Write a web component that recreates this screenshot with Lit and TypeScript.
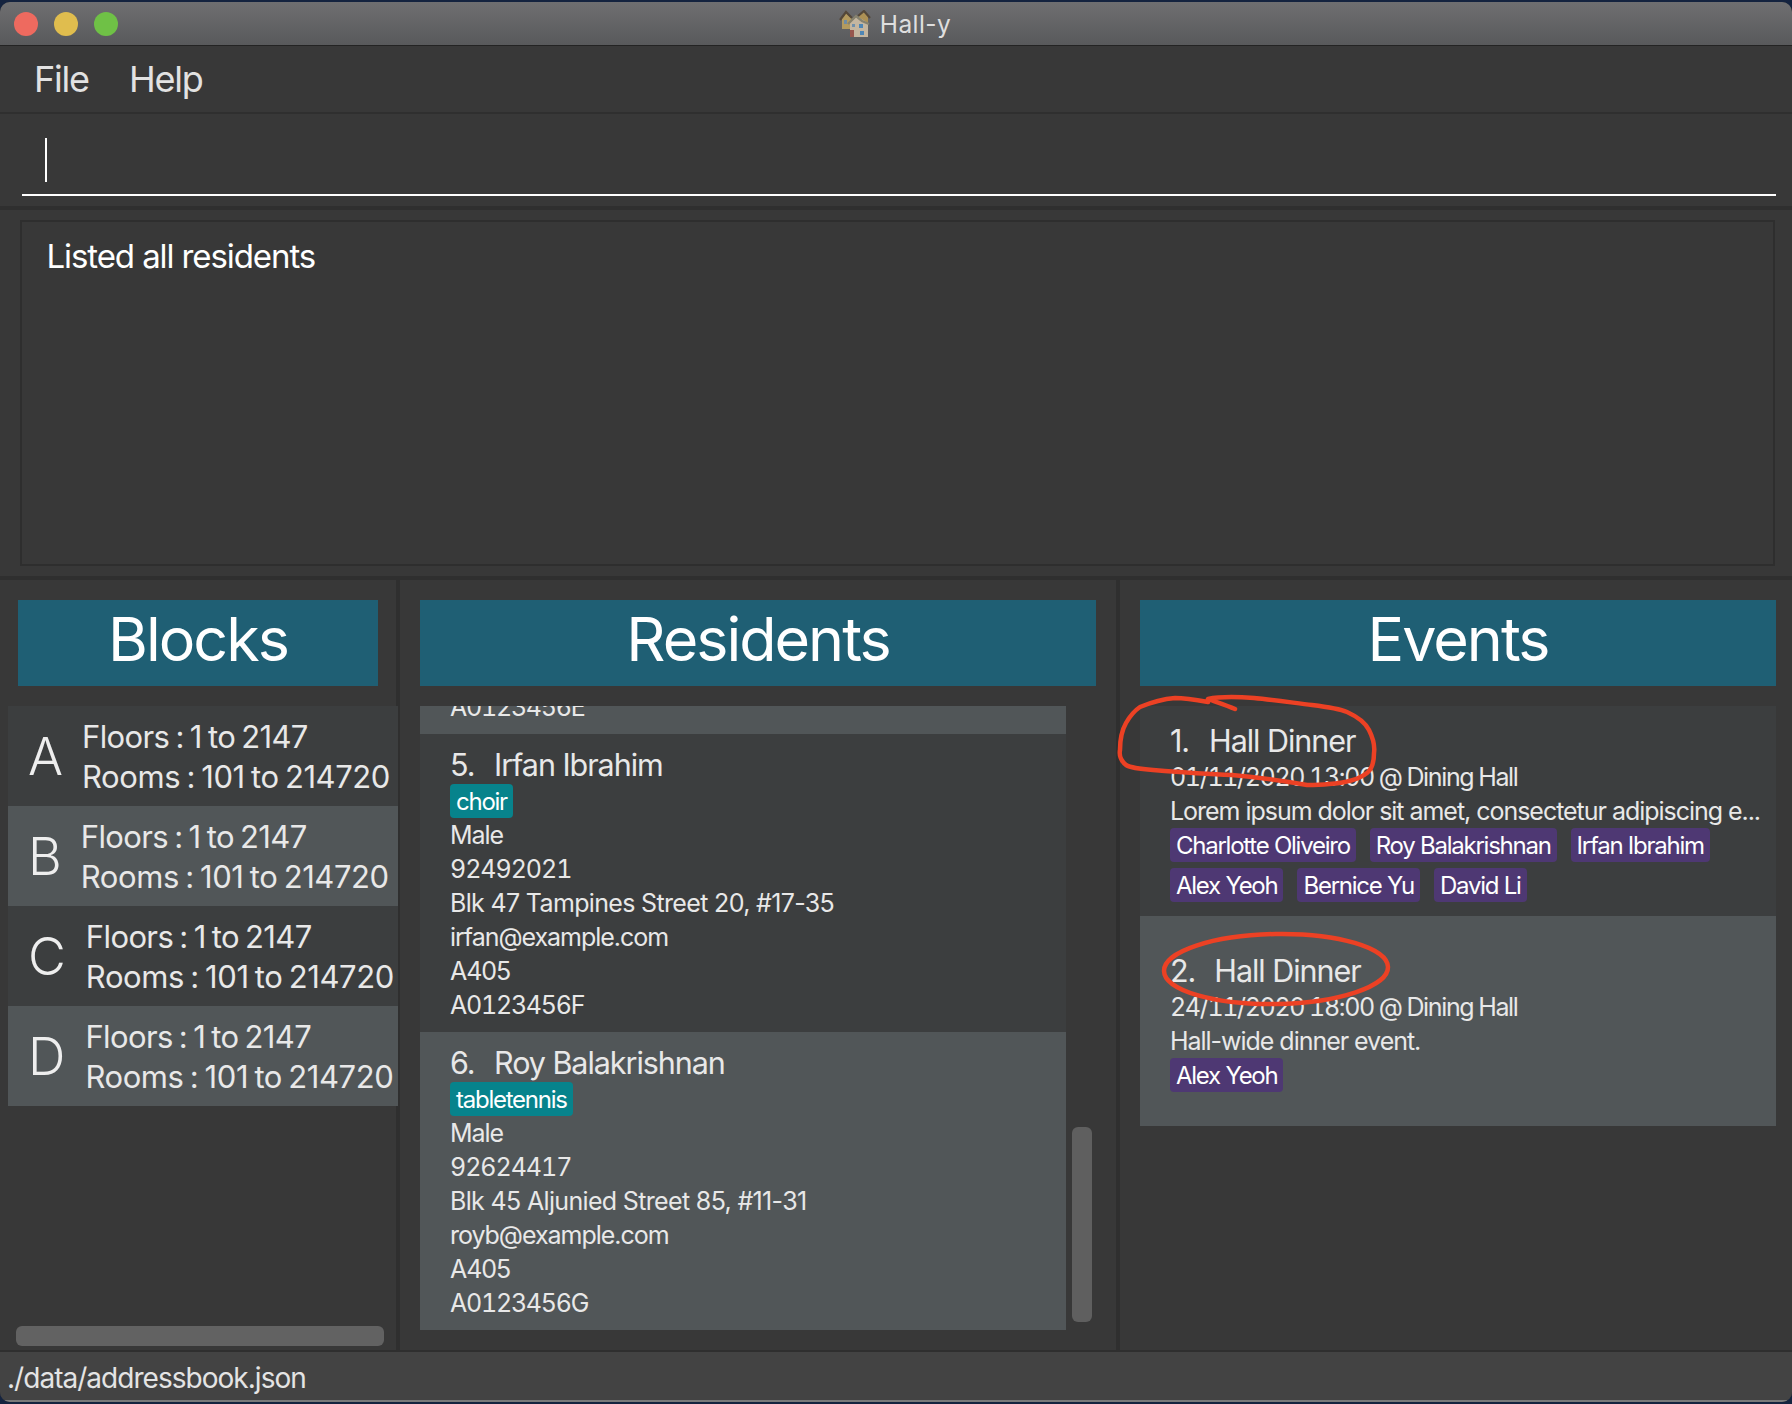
import { LitElement, html, css, svg } from "lit";
import { customElement } from "lit/decorators.js";

const blocks = [
  { l: "A", gap: 19 },
  { l: "B", gap: 19 },
  { l: "C", gap: 20 },
  { l: "D", gap: 20 },
];

const residents = [
  { n: "5.", name: "Irfan Ibrahim", tag: "choir", phone: "92492021", addr: "Blk 47 Tampines Street 20, #17-35", mail: "irfan@example.com", id: "A0123456F", alt: false },
  { n: "6.", name: "Roy Balakrishnan", tag: "tabletennis", phone: "92624417", addr: "Blk 45 Aljunied Street 85, #11-31", mail: "royb@example.com", id: "A0123456G", alt: true },
];

const events = [
  { n: "1.", date: "01/11/2020 13:00 @ Dining Hall", desc: "Lorem ipsum dolor sit amet, consectetur adipiscing e...", tags: ["Charlotte Oliveiro", "Roy Balakrishnan", "Irfan Ibrahim", "Alex Yeoh", "Bernice Yu", "David Li"], alt: false },
  { n: "2.", date: "24/11/2020 18:00 @ Dining Hall", desc: "Hall-wide dinner event.", tags: ["Alex Yeoh"], alt: true },
];

@customElement("app-root")
export class AppRoot extends LitElement {
  static styles = css`
    :host {
      display: block;
      position: relative;
      width: 1792px;
      height: 1404px;
      overflow: hidden;
      background: #14233f;
      font-family: Inter, "Liberation Sans", sans-serif;
      color: #e8e8e8;
    }
    .window {
      margin-top: 2px;
      height: 1400px;
      display: flex;
      flex-direction: column;
      background: #383838;
      border-radius: 10px 10px 10px 10px;
      overflow: hidden;
    }
    .title {
      flex: none;
      height: 43px;
      background: linear-gradient(#6f6f71, #58595b);
      border-bottom: 1px solid #232323;
      display: flex;
      align-items: center;
      justify-content: center;
      position: relative;
    }
    .lights {
      position: absolute;
      left: 14px;
      top: 10px;
      display: flex;
      gap: 16px;
    }
    .light { width: 24px; height: 24px; border-radius: 50%; }
    .red { background: #ee6a5f; }
    .yellow { background: #e0bd4e; }
    .green { background: #6fc146; }
    .app-title {
      display: flex;
      align-items: center;
      gap: 9px;
      margin-left: -2px;
      font-size: 24.5px;
      color: #dedede;
      letter-spacing: 0.4px;
    }
    .menu {
      flex: none;
      height: 66px;
      border-bottom: 2px solid #2f2f2f;
      display: flex;
      align-items: center;
      gap: 40px;
      padding-left: 34px;
      font-size: 36px;
      letter-spacing: -1.2px;
      color: #e2e2e2;
    }
    .command {
      flex: none;
      height: 92px;
      border-bottom: 4px solid #2f2f2f;
      box-sizing: content-box;
      padding: 0 16px 0 22px;
      display: flex;
      flex-direction: column;
    }
    .cmd-field {
      height: 82px;
      border-bottom: 2px solid #fff;
      padding: 24px 0 0 23px;
      box-sizing: border-box;
    }
    .caret { width: 2px; height: 44px; background: #fff; }
    .result-wrap {
      flex: none;
      height: 366px;
      box-sizing: content-box;
      border-bottom: 4px solid #2f2f2f;
      padding: 0 17px 0 20px;
      display: flex;
      align-items: center;
    }
    .result {
      flex: 1;
      height: 346px;
      box-sizing: border-box;
      border: 2px solid #2e2e2e;
      padding: 14px 0 0 24.5px;
      font-size: 33px;
      letter-spacing: -1.09px;
      color: #fff;
      line-height: 40px;
    }
    .panels {
      flex: none;
      height: 770px;
      border-bottom: 2px solid #2f2f2f;
      display: flex;
    }
    .panel {
      display: flex;
      flex-direction: column;
      padding-top: 20px;
      box-sizing: border-box;
      position: relative;
    }
    .p-blocks { width: 400px; border-right: 4px solid #2f2f2f; }
    .p-res { width: 720px; border-right: 4px solid #2f2f2f; }
    .p-events { width: 672px; }
    .head {
      height: 86px;
      flex: none;
      box-sizing: border-box;
      padding-bottom: 8px;
      background: #1f5f74;
      color: #fff;
      font-size: 61px;
      letter-spacing: -2px;
      display: flex;
      align-items: center;
      justify-content: center;
      margin-bottom: 20px;
    }
    .p-blocks .head { margin-left: 18px; margin-right: 18px; }
    .p-res .head { margin-left: 20px; margin-right: 20px; }
    .p-events .head { margin-left: 20px; margin-right: 16px; }
    .b-list { margin-left: 8px; margin-right: -2px; }
    .b-row {
      height: 100px;
      display: flex;
      align-items: center;
      background: #3c3e3f;
      padding-left: 20px;
      white-space: nowrap;
    }
    .b-row.alt { background: #515658; }
    .b-letter { font-size: 52px; line-height: 1; font-weight: 300; color: #eee; padding-top: 2px; }
    .b-text { font-size: 31px; line-height: 40px; padding-top: 2px; }
    .floors { letter-spacing: -0.62px; word-spacing: -2px; }
    .rooms { letter-spacing: -0.42px; word-spacing: -2px; }
    .h-scroll {
      position: absolute;
      left: 16px;
      width: 368px;
      bottom: 4px;
      height: 20px;
      border-radius: 6px;
      background: #626262;
    }
    .res-body { display: flex; margin-left: 20px; }
    .r-list { width: 646px; height: 624px; overflow: hidden; flex: none; }
    .peek { height: 28px; background: #515658; padding-left: 30px; overflow: hidden; }
    .peek .line { margin-top: -16px; }
    .r-row {
      height: 298px;
      box-sizing: border-box;
      padding: 11px 0 0 30px;
      background: #3c3e3f;
    }
    .r-row.alt { background: #515658; }
    .name {
      font-size: 30.5px;
      line-height: 39px;
      letter-spacing: -1.05px;
      white-space: pre;
      display: flex;
    }
    .num { display: inline-block; }
    .r-row .num { width: 44px; }
    .line {
      font-size: 25px;
      line-height: 34px;
      letter-spacing: -1.03px;
      white-space: nowrap;
    }
    .line.digits { font-variant-numeric: tabular-nums; letter-spacing: -1.05px; }
    .line.code { font-variant-numeric: tabular-nums; letter-spacing: -1.25px; }
    .line.date { font-variant-numeric: tabular-nums; letter-spacing: -1.35px; word-spacing: -0.5px; }
    .line.addr { letter-spacing: -0.66px; }
    .tags { display: flex; flex-wrap: wrap; gap: 6px 14px; }
    .tag {
      height: 34px;
      line-height: 35px;
      font-size: 24px;
      letter-spacing: -1.25px;
      padding: 0 6px;
      border-radius: 4px;
      color: #fff;
      white-space: nowrap;
    }
    .t-teal { background: #07838c; }
    .t-purple { background: #4e3873; }
    .v-scroll {
      margin: 421px 0 0 6px;
      width: 20px;
      height: 195px;
      border-radius: 6px;
      background: #5f5f5f;
    }
    .e-list { margin-left: 20px; margin-right: 16px; }
    .e-row {
      height: 210px;
      box-sizing: border-box;
      padding: 1px 10px 0 30px;
      background: #3c3e3f;
      display: flex;
      flex-direction: column;
      justify-content: center;
    }
    .e-row.alt { background: #515658; }
    .e-row .num { margin-right: 20px; }
    .e-row.alt .num { margin-right: 19px; }
    .status {
      flex: 1;
      background: #434343;
      font-size: 28px;
      letter-spacing: -0.97px;
      padding: 6px 0 0 7px;
      border-bottom: 2px solid #7a7a7a;
      color: #e4e4e4;
      line-height: 40px;
    }
    .marks {
      position: absolute;
      inset: 0;
      width: 1792px;
      height: 1404px;
      pointer-events: none;
    }
  `;

  private houseIcon() {
    return html`<svg width="32" height="27" viewBox="0 0 32 27">
      <path d="M3 8 L7 3 L13 9 L13 19 L3 19Z" fill="#b39a5f"/>
      <path d="M1 10 L7 2 L13 8" fill="none" stroke="#54483a" stroke-width="2.2"/>
      <rect x="5" y="10" width="3" height="4" fill="#6f8ca4"/>
      <path d="M20 5 L25 1 L29 6 L29 15 L20 15Z" fill="#ad9155"/>
      <path d="M19 6 L25 1 L31 8" fill="none" stroke="#54483a" stroke-width="2.2"/>
      <path d="M11 13 L18 6 L29 13 L29 27 L11 27Z" fill="#c4b6a0"/>
      <path d="M9 14 L17 6 L23 11 L30 14" fill="none" stroke="#86826f" stroke-width="2.4"/>
      <rect x="11" y="20" width="4" height="7" fill="#96574e"/>
      <rect x="13" y="14" width="3" height="3" fill="#6f90ac"/>
      <rect x="20" y="14" width="4" height="4" fill="#4f86b4"/>
      <rect x="21" y="21" width="4" height="4" fill="#4f86b4"/>
    </svg>`;
  }

  render() {
    return html`
      <div class="window">
        <div class="title">
          <div class="lights">
            <div class="light red"></div>
            <div class="light yellow"></div>
            <div class="light green"></div>
          </div>
          <div class="app-title">${this.houseIcon()}<span>Hall-y</span></div>
        </div>
        <div class="menu"><span>File</span><span>Help</span></div>
        <div class="command">
          <div class="cmd-field"><div class="caret"></div></div>
        </div>
        <div class="result-wrap"><div class="result">Listed all residents</div></div>
        <div class="panels">
          <div class="panel p-blocks">
            <div class="head">Blocks</div>
            <div class="b-list">
              ${blocks.map(
                (b, i) => html`<div class="b-row ${i % 2 ? "alt" : ""}">
                  <div class="b-letter" style="margin-right:${b.gap}px">${b.l}</div>
                  <div class="b-text">
                    <div class="floors">Floors : 1 to 2147</div>
                    <div class="rooms">Rooms : 101 to 214720</div>
                  </div>
                </div>`
              )}
            </div>
            <div class="h-scroll"></div>
          </div>
          <div class="panel p-res">
            <div class="head">Residents</div>
            <div class="res-body">
              <div class="r-list">
                <div class="peek"><div class="line code">A0123456E</div></div>
                ${residents.map(
                  (r) => html`<div class="r-row ${r.alt ? "alt" : ""}">
                    <div class="name"><span class="num">${r.n}</span><span>${r.name}</span></div>
                    <div class="tags"><span class="tag t-teal">${r.tag}</span></div>
                    <div class="line">Male</div>
                    <div class="line digits">${r.phone}</div>
                    <div class="line addr">${r.addr}</div>
                    <div class="line">${r.mail}</div>
                    <div class="line">A405</div>
                    <div class="line code">${r.id}</div>
                  </div>`
                )}
              </div>
              <div class="v-scroll"></div>
            </div>
          </div>
          <div class="panel p-events">
            <div class="head">Events</div>
            <div class="e-list">
              ${events.map(
                (e) => html`<div class="e-row ${e.alt ? "alt" : ""}">
                  <div class="name"><span class="num">${e.n}</span><span>Hall Dinner</span></div>
                  <div class="line date">${e.date}</div>
                  <div class="line">${e.desc}</div>
                  <div class="tags">
                    ${e.tags.map((t) => html`<span class="tag t-purple">${t}</span>`)}
                  </div>
                </div>`
              )}
            </div>
          </div>
        </div>
        <div class="status">./data/addressbook.json</div>
      </div>
      <svg class="marks" viewBox="0 0 1792 1404">
        ${svg`<path d="M1235 709 C1226 705 1216 702 1208 699 C1222 696 1240 697 1254 698 C1275 700 1295 703 1312 705 C1328 707 1340 709 1347 712 C1358 717 1366 724 1369 730 C1373 738 1375 746 1374 753 C1374 762 1372 769 1367 773 C1358 780 1345 783 1329 784 C1320 785 1314 785 1307 785 C1285 781 1255 777 1232 775 C1205 774 1178 772 1153 770 C1140 769 1131 768 1126 765 C1121 761 1119 755 1120 750 C1120 740 1122 730 1126 723 C1130 716 1134 711 1140 707 C1152 702 1163 699 1175 698 C1186 698 1197 700 1208 702" fill="none" stroke="#ec4124" stroke-width="4.5" stroke-linecap="round" stroke-linejoin="round"/>
        <ellipse cx="1276" cy="969" rx="112" ry="35" transform="rotate(-1 1276 969)" fill="none" stroke="#ec4124" stroke-width="4.5"/>`}
      </svg>
    `;
  }
}
